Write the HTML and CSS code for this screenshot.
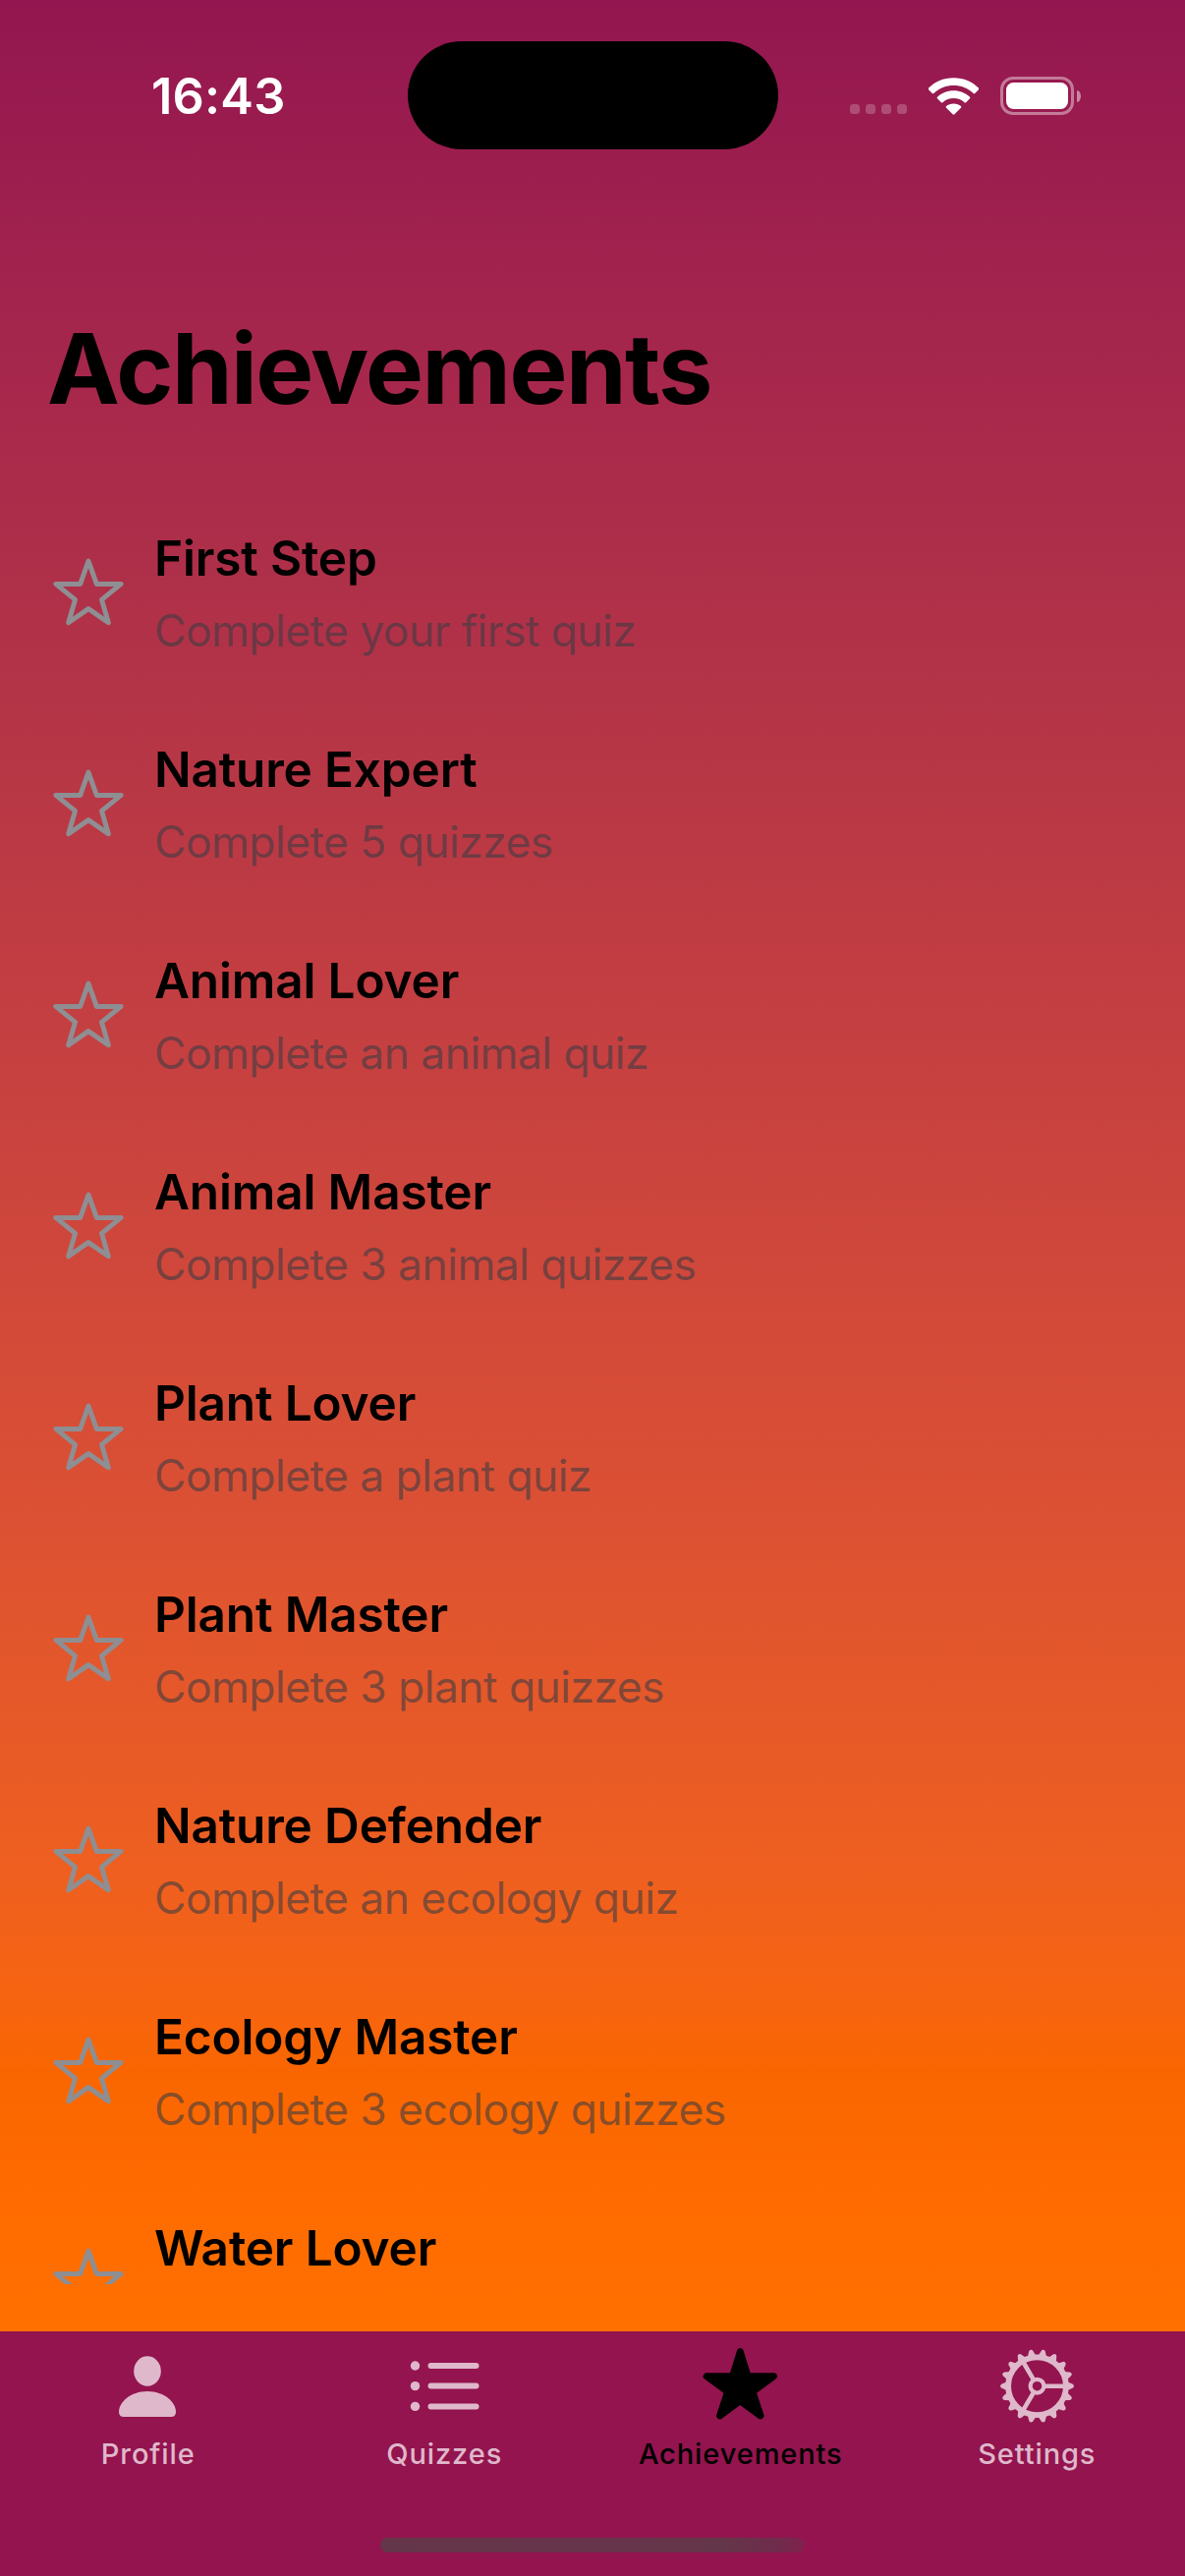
FILE: index.html
```html
<!DOCTYPE html>
<html lang="en">
<head>
<meta charset="utf-8">
<title>Achievements</title>
<link rel="stylesheet" href="styles.css">
</head>
<body>
<svg class="sprite" aria-hidden="true">
  <symbol id="star" viewBox="0 0 100 100">
    <path d="M50 21 L58.3 44.4 L83.2 44.4 L63.5 60.4 L70.3 83.8 L50 69.6 L29.7 83.8 L36.5 60.4 L16.8 44.4 L41.7 44.4 Z"/>
  </symbol>
</svg>
<div class="screen">
  <header class="status-bar">
    <time class="clock">16:43</time>
    <div class="island"></div>
    <div class="indicators">
      <div class="signal"><i></i><i></i><i></i><i></i></div>
      <svg class="wifi" viewBox="0 0 50 37">
        <path d="M25 0C35 0 44 4 50 10.2Q50.6 11 50 11.8L46.3 15.6Q45.5 16.200 44.700 15.500C39 10.300 32.500 7.700 25 7.700S11 10.300 5.300 15.500Q4.500 16.200 3.700 15.600L0 11.800Q-.6 11 0 10.200C6 4 15 0 25 0Z"/>
        <path d="M25 12.800C31.500 12.800 37 15.100 41.200 19.200Q42 20 41.200 20.800L37.400 24.600Q36.600 25.300 35.800 24.600C32.700 21.900 29.300 20.500 25 20.500S17.300 21.900 14.200 24.600Q13.400 25.300 12.600 24.600L8.800 20.800Q8 20 8.800 19.200C13 15.100 18.500 12.800 25 12.800Z"/>
        <path d="M25 25.800C28 25.800 30.500 26.800 32.300 28.400Q33 29.100 32.300 29.900L25.900 36.400Q25 37.200 24.100 36.400L17.700 29.900Q17 29.100 17.700 28.400C19.500 26.800 22 25.800 25 25.800Z"/>
      </svg>
      <div class="battery"><div class="shell"><div class="charge"></div></div><div class="nub"></div></div>
    </div>
  </header>
  <h1 class="title">Achievements</h1>
  <ul class="list">
    <li class="row"><svg class="star"><use href="#star"/></svg><div><h2>First Step</h2><p>Complete your first quiz</p></div></li>
    <li class="row"><svg class="star"><use href="#star"/></svg><div><h2>Nature Expert</h2><p>Complete 5 quizzes</p></div></li>
    <li class="row"><svg class="star"><use href="#star"/></svg><div><h2>Animal Lover</h2><p>Complete an animal quiz</p></div></li>
    <li class="row"><svg class="star"><use href="#star"/></svg><div><h2>Animal Master</h2><p>Complete 3 animal quizzes</p></div></li>
    <li class="row"><svg class="star"><use href="#star"/></svg><div><h2>Plant Lover</h2><p>Complete a plant quiz</p></div></li>
    <li class="row"><svg class="star"><use href="#star"/></svg><div><h2>Plant Master</h2><p>Complete 3 plant quizzes</p></div></li>
    <li class="row"><svg class="star"><use href="#star"/></svg><div><h2>Nature Defender</h2><p>Complete an ecology quiz</p></div></li>
    <li class="row"><svg class="star"><use href="#star"/></svg><div><h2>Ecology Master</h2><p>Complete 3 ecology quizzes</p></div></li>
    <li class="row"><svg class="star"><use href="#star"/></svg><div><h2>Water Lover</h2></div></li>
  </ul>
  <nav class="tab-bar">
    <div class="tabs">
      <a class="tab">
        <svg viewBox="0 0 90 90"><ellipse cx="44" cy="30.500" rx="13.800" ry="15.200"/><path d="M20 77Q15 77 15 72C15 62 27 51 44 51S73 62 73 72Q73 77 68 77Z"/></svg>
        <span>Profile</span>
      </a>
      <a class="tab">
        <svg viewBox="0 0 90 90"><g><circle cx="15.500" cy="25" r="4.700"/><circle cx="15.500" cy="45.600" r="4.700"/><circle cx="15.500" cy="66.400" r="4.700"/></g><path class="line" d="M31.500 25H77.500M31.500 45.600H77.500M31.500 66.400H77.500"/></svg>
        <span>Quizzes</span>
      </a>
      <a class="tab active">
        <svg viewBox="0 0 90 90"><path class="solid-star" d="M44.300 10.700L52 35.500L78.400 35.700L57 51.300L65 75.900L44.300 60.700L23.600 75.900L31.600 51.300L10.200 35.700L36.600 35.500Z"/></svg>
        <span>Achievements</span>
      </a>
      <a class="tab">
        <svg viewBox="-.5 0 90 90">
          <g class="gear"><circle cx="45" cy="45.700" r="29.400" stroke-width="5.800"/><circle cx="45" cy="45.700" r="6.900" stroke-width="4.200"/><path stroke-width="4.600" d="M53 45.700H73M41.200 38.800L31 21.500M41.200 52.600L31 69.900"/></g>
          <g id="teeth"></g>
        </svg>
        <span>Settings</span>
      </a>
    </div>
    <div class="home-indicator"></div>
  </nav>
</div>
<script src="gear.js"></script>
</body>
</html>
```
FILE: gear.js
```javascript
// Builds the eighteen teeth around the settings gear.
const teeth = document.getElementById("teeth");
for (let i = 0; i < 18; i++) {
  const tooth = document.createElementNS("http://www.w3.org/2000/svg", "path");
  tooth.setAttribute("d", "M75.500 41.200L81 43.600Q82.400 44.300 82.400 45.700T81 47.800L75.500 50.200Z");
  tooth.setAttribute("transform", `rotate(${i * 20} 45 45.700)`);
  teeth.appendChild(tooth);
}
```
FILE: styles.css
```css
* { box-sizing: border-box; margin: 0; padding: 0; }
body { font-family: Inter, "Liberation Sans", sans-serif; color: #000; }
.sprite { position: absolute; width: 0; height: 0; }
.screen {
  width: 1206px; height: 2622px; overflow: hidden;
  display: flex; flex-direction: column;
  background: linear-gradient(to bottom, #931650 0, #a3244d 300px, #b33447 700px, #c74140 1100px, #dc5133 1550px, #ee5f20 1900px, #f76410 2040px, #f96600 2110px, #ff6b00 2240px, #ff7000 2373px);
}
.status-bar { height: 194px; flex: none; display: grid; grid-template-columns: 415px 377px 414px; align-items: start; }
.clock { padding: 68px 0 0 154px; font-size: 50.500px; line-height: 60px; font-weight: 600; letter-spacing: .2px; color: #fff; white-space: nowrap; }
.island { margin-top: 42px; height: 110px; border-radius: 55px; background: #000; }
.indicators { display: flex; align-items: flex-start; padding-left: 73px; }
.signal { display: flex; gap: 6px; margin: 106px 22px 0 0; }
.signal i { width: 10px; height: 10px; border-radius: 3.500px; background: rgba(255,255,255,.22); }
.wifi { width: 51px; height: 38px; margin: 79px 22px 0 0; fill: #fff; }
.battery { display: flex; align-items: center; gap: 3px; margin-top: 78px; }
.shell { width: 75px; height: 39px; padding: 3px; border: 3px solid rgba(255,255,255,.42); border-radius: 13px; }
.charge { height: 27px; border-radius: 7.500px; background: #fff; }
.nub { width: 4px; height: 12px; border-radius: 0 4px 4px 0 / 0 6px 6px 0; background: rgba(255,255,255,.48); }
.title { height: 298px; padding: 121px 0 0 48px; font-size: 99px; line-height: 120px; font-weight: 700; letter-spacing: -1.500px; flex: none; }
.list { flex: none; height: 1833px; overflow: hidden; list-style: none; }
.row { height: 215px; padding: 46px 0 0 40px; display: flex; gap: 17px; }
.star { width: 100px; height: 100px; margin-top: 12px; fill: none; stroke: #8e8e93; stroke-width: 5; stroke-linejoin: round; flex: none; }
.row h2 { font-size: 49.500px; line-height: 60px; font-weight: 600; letter-spacing: -.15px; white-space: nowrap; }
.row p { margin-top: 14px; font-size: 44.500px; line-height: 60px; letter-spacing: -.6px; color: rgba(60,60,67,.6); white-space: nowrap; }
.tab-bar { margin-top: auto; height: 249px; flex: none; background: #93144e; }
.tabs { display: grid; grid-template-columns: repeat(4, 1fr); height: 210px; }
.tab { display: flex; flex-direction: column; align-items: center; padding-top: 10px; color: #dfb8cb; fill: currentColor; }
.tab svg { width: 90px; height: 90px; }
.tab span { margin-top: 6px; font-size: 29px; line-height: 38px; font-weight: 450; letter-spacing: .9px; }
.tab.active { color: #000; }
.line { fill: none; stroke: currentColor; stroke-width: 6; stroke-linecap: round; }
.solid-star { stroke: currentColor; stroke-width: 7; stroke-linejoin: round; }
.gear { fill: none; stroke: currentColor; }
.home-indicator { width: 432px; height: 15px; margin: 0 auto; border-radius: 8px; background: linear-gradient(100deg, #643649 0, #67344b 50%, #643649 80%, #702b4c 94%, #83204e 100%); }
```
